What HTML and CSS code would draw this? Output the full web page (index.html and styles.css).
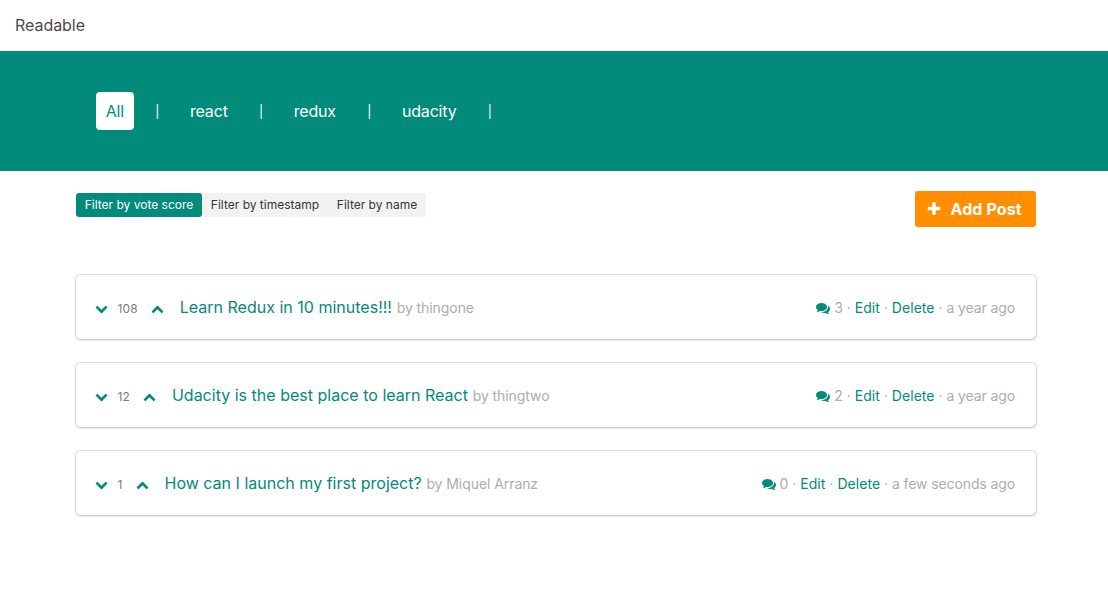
FILE: index.html
```
<!DOCTYPE html>
<html lang="en">
<head>
<meta charset="utf-8">
<title>Readable</title>
<link rel="stylesheet" href="styles.css">
</head>
<body>
<svg width="0" height="0" class="sprite">
  <symbol id="down" viewBox="0 0 1792 1792"><path d="M1683 808l-742 741q-19 19-45 19t-45-19l-742-741q-19-19-19-45.500t19-45.500l166-165q19-19 45-19t45 19l531 531 531-531q19-19 45-19t45 19l166 165q19 19 19 45.500t-19 45.500z"/></symbol>
  <symbol id="plus" viewBox="0 0 1792 1792"><path d="M1600 736v192q0 40-28 68t-68 28h-416v416q0 40-28 68t-68 28h-192q-40 0-68-28t-28-68v-416h-416q-40 0-68-28t-28-68v-192q0-40 28-68t68-28h416v-416q0-40 28-68t68-28h192q40 0 68 28t28 68v416h416q40 0 68 28t28 68z"/></symbol>
  <symbol id="comments" viewBox="0 0 1792 1792"><path d="M1408 768q0 139-94 257t-256.500 186.500-353.500 68.500q-86 0-176-16-124 88-278 128-36 9-86 16h-3q-11 0-20.500-8t-11.500-21q-1-3-1-6.500t.5-6.500 2-6l2.500-5 3.500-5.500 4-5 4.500-5 4-4.500q5-6 23-25t26-29.500 22.500-29 25-38.500 20.500-44q-124-72-195-177t-71-224q0-139 94-257t256.500-186.500 353.500-68.500 353.500 68.500 256.500 186.500 94 257zm384 256q0 120-71 224.500t-195 176.500q10 24 20.500 44t25 38.500 22.500 29 26 29.500 23 25q1 1 4 4.500t4.500 5 4 5 3.500 5.500l2.500 5 2 6 .5 6.500-1 6.500q-3 14-13 22t-22 7q-50-7-86-16-154-40-278-128-90 16-176 16-271 0-472-132 58 4 88 4 161 0 309-45t264-129q125-92 192-212t67-254q0-77-23-152 129 71 204 178t75 230z"/></symbol>
</svg>
<header class="navbar"><span>Readable</span></header>
<nav class="hero">
  <a class="tab active">All</a><span class="sep">|</span>
  <a class="tab">react</a><span class="sep">|</span>
  <a class="tab">redux</a><span class="sep">|</span>
  <a class="tab">udacity</a><span class="sep">|</span>
</nav>
<main class="container">
  <div class="toolbar">
    <div class="filters">
      <a class="filter on f1">Filter by vote score</a>
      <a class="filter f2">Filter by timestamp</a>
      <a class="filter f3">Filter by name</a>
    </div>
    <a class="add"><svg class="plus"><use href="#plus"/></svg><span>Add Post</span></a>
  </div>
  <article class="card">
    <svg class="arrow"><use href="#down"/></svg><span class="score">108</span><svg class="arrow up"><use href="#down"/></svg>
    <a class="title">Learn Redux in 10 minutes!!!</a><span class="by">by thingone</span>
    <div class="meta"><svg class="comments"><use href="#comments"/></svg><span>3 · <a>Edit</a> · <a>Delete</a> · <time>a year ago</time></span></div>
  </article>
  <article class="card">
    <svg class="arrow"><use href="#down"/></svg><span class="score">12</span><svg class="arrow up"><use href="#down"/></svg>
    <a class="title">Udacity is the best place to learn React</a><span class="by">by thingtwo</span>
    <div class="meta"><svg class="comments"><use href="#comments"/></svg><span>2 · <a>Edit</a> · <a>Delete</a> · <time>a year ago</time></span></div>
  </article>
  <article class="card">
    <svg class="arrow"><use href="#down"/></svg><span class="score">1</span><svg class="arrow up"><use href="#down"/></svg>
    <a class="title">How can I launch my first project?</a><span class="by">by Miquel Arranz</span>
    <div class="meta"><svg class="comments"><use href="#comments"/></svg><span>0 · <a>Edit</a> · <a>Delete</a> · <time>a few seconds ago</time></span></div>
  </article>
</main>
</body>
</html>
```
FILE: styles.css
```
* { box-sizing: border-box; }
body { margin: 0; background: #fff; color: #4a4a4a; font: 16px/24px Inter, "Liberation Sans", sans-serif; white-space: nowrap; }
svg { fill: currentColor; flex: none; }
.sprite { display: block; height: 0; }
.navbar { height: 51px; padding: 13px 15px; letter-spacing: -.05px; }
.hero { height: 120px; background: #028a7b; color: #fff; display: flex; align-items: center; padding-left: 96px; }
.tab { height: 38px; line-height: 38px; padding: 0 10.300px 0 9.700px; border-radius: 4px; letter-spacing: -.17px; }
.tab.active { background: #fff; color: #028a7b; }
.sep { width: 46px; padding-top: 1px; text-align: center; font-size: 12.5px; }
.container { width: 960px; margin-left: 76px; }
.toolbar { display: flex; justify-content: space-between; align-items: flex-start; padding-top: 20px; height: 104px; }
.filters { display: flex; margin-top: 2px; font-size: 12px; color: #363636; }
.filter { height: 24px; background: #f2f2f2; border-radius: 3px; text-align: center; }
.filter.on { background: #028a7b; color: #fff; }
.f1, .f2 { width: 126px; }
.f3 { width: 98px; }
.add { display: flex; align-items: center; width: 121px; height: 36px; padding-left: 11px; background: #ff8f00; color: #fff; font-weight: 700; letter-spacing: .1px; border-radius: 3px; }
.plus { width: 16px; height: 16px; margin-right: 8.500px; }
.card { display: flex; align-items: center; height: 64px; margin-bottom: 24px; padding: 0 21px 0 19px; border-radius: 5px; box-shadow: 0 1px 3px rgba(10,10,10,.18), 0 0 0 1px rgba(10,10,10,.1); color: #028a7b; }
.arrow { width: 13px; height: 13px; margin-top: 2px; }
.arrow.up { margin-top: 7px; transform: rotate(180deg); }
.score { margin: 3px 13.500px 0 9.500px; font-size: 12px; letter-spacing: .1px; color: #7a7a7a; }
.title { margin-left: 15.500px; letter-spacing: .01px; }
.by { margin: 2px 0 0 4.700px; font-size: 14px; letter-spacing: -.07px; color: #adadad; }
.meta { display: flex; align-items: center; margin: 2px 0 0 auto; font-size: 14px; color: #adadad; }
.meta a { color: #028a7b; letter-spacing: .05px; }
.meta time { letter-spacing: -.11px; }
.comments { width: 14px; height: 14px; margin-right: 4px; color: #028a7b; }
```
